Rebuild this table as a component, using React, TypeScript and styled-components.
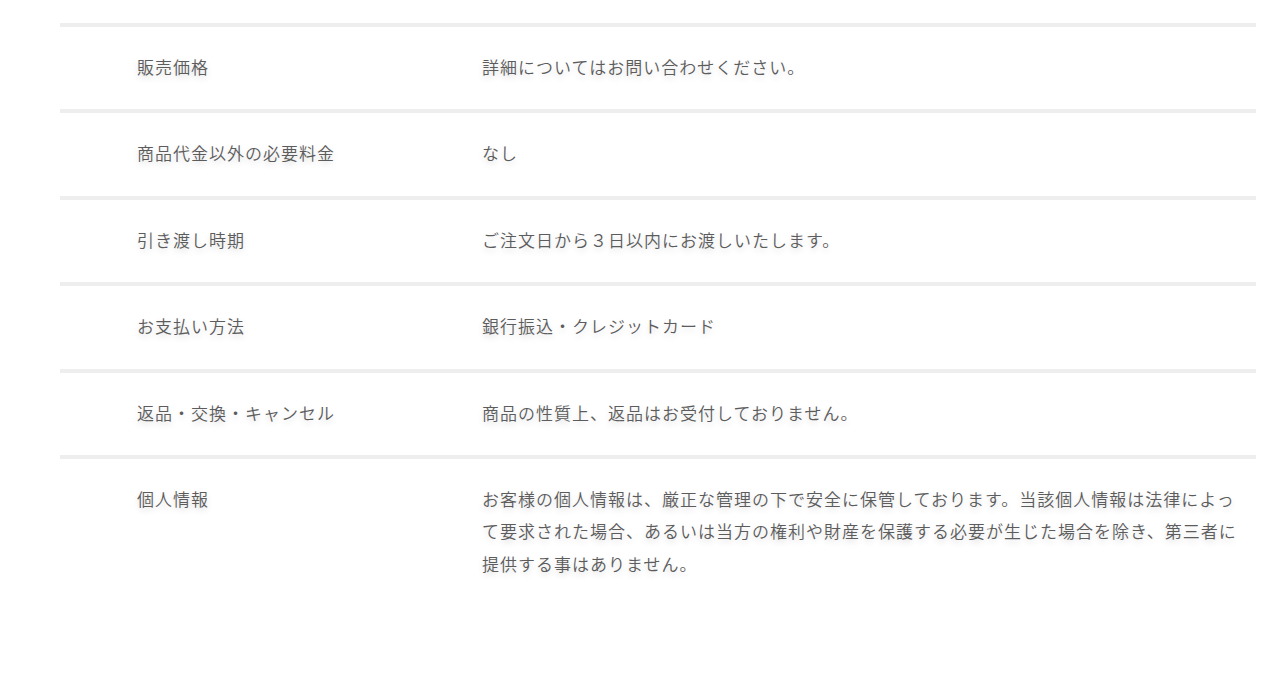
import styled, { createGlobalStyle } from 'styled-components'

const GlobalStyle = createGlobalStyle`
  html, body {
    margin: 0;
    padding: 0;
    background: #ffffff;
  }
  body {
    font-family: 'Noto Sans CJK JP', 'Noto Sans', sans-serif;
  }
`

const rows = [
  { label: '販売価格', value: '詳細についてはお問い合わせください。' },
  { label: '商品代金以外の必要料金', value: 'なし' },
  { label: '引き渡し時期', value: 'ご注文日から３日以内にお渡しいたします。' },
  { label: 'お支払い方法', value: '銀行振込・クレジットカード' },
  { label: '返品・交換・キャンセル', value: '商品の性質上、返品はお受付しておりません。' },
  {
    label: '個人情報',
    value:
      'お客様の個人情報は、厳正な管理の下で安全に保管しております。当該個人情報は法律によって要求された場合、あるいは当方の権利や財産を保護する必要が生じた場合を除き、第三者に提供する事はありません。',
  },
]

export default function App() {
  return (
    <>
      <GlobalStyle />
      <Page>
        <Table>
          {rows.map((r) => (
            <Row key={r.label}>
              <Label>{r.label}</Label>
              <Value>{r.value}</Value>
            </Row>
          ))}
        </Table>
      </Page>
    </>
  )
}

const Page = styled.div`
  padding: 23px 24px 0 60px;
`

const Table = styled.div`
  display: flex;
  flex-direction: column;
`

const Row = styled.div`
  display: grid;
  grid-template-columns: 422px 1fr;
  border-top: 4px solid #eeeeee;
  padding: 24px 0 26px;

  color: #5c5c5c;
  font-size: 17px;
  font-weight: 350;
  letter-spacing: 1px;
  line-height: 32.4px;
  text-shadow: 0 3px 6px rgba(0, 0, 0, 0.15);
`

const Label = styled.div`
  padding-left: 77px;
`

const Value = styled.div`
  padding-right: 10px;
  line-break: strict;
`
